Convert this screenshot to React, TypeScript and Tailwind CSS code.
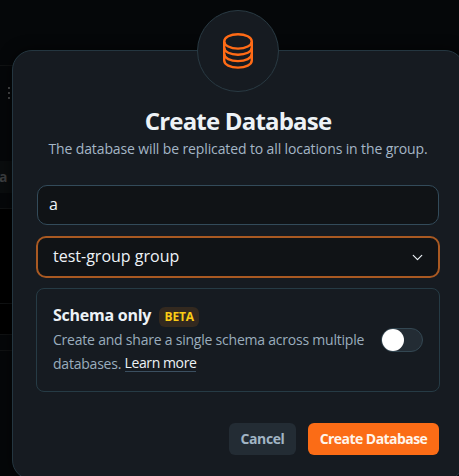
import { ChevronDown } from "lucide-react";

function DatabaseIcon() {
  return (
    <svg width="32" height="38" viewBox="0 0 32 38" fill="none" stroke="#ff6b16" strokeWidth="2.4">
      <ellipse cx="16" cy="9.4" rx="13.8" ry="7.2" />
      <path d="M2.2 9.4V28.6C2.2 32.6 8.3 35.6 16 35.6S29.8 32.6 29.8 28.6V9.4" />
      <path d="M2.2 15.8C2.2 19.8 8.3 22.7 16 22.7S29.8 19.8 29.8 15.8" />
      <path d="M2.2 22.1C2.2 26.1 8.3 29.1 16 29.1S29.8 26.1 29.8 22.1" />
    </svg>
  );
}

function Backdrop() {
  return (
    <div className="absolute inset-0 text-[#3c3e40]">
      <div className="h-[66px] border-b border-[#101213]" />
      <div className="flex h-[95px] flex-col gap-[3px] pt-[21px] pl-2">
        <i className="h-0.5 w-0.5 bg-[#48494a]" />
        <i className="h-0.5 w-0.5 bg-[#48494a]" />
        <i className="h-0.5 w-0.5 bg-[#48494a]" />
      </div>
      <div className="h-8 w-3 bg-[#0a0d0e] text-[14px] leading-8 font-bold"><span className="-ml-px">a</span></div>
      <div className="h-4 border-b border-[#101213]" />
      <div className="h-[95px] border-b border-[#101213] bg-black" />
      <div className="h-[31px] border-b border-[#101213] bg-black" />
      <div className="h-4 border-b border-[#101213]" />
    </div>
  );
}

export default function App() {
  return (
    <main className="relative h-[476px] w-[459px] overflow-hidden bg-[#050709] font-['Open_Sans','Noto_Sans',sans-serif]">
      <Backdrop />
      <section className="absolute top-[50px] left-3 flex h-[430px] w-[453px] flex-col rounded-[20px] border border-[#243640] bg-[#161b21] px-6 shadow-[0_0_14px_rgba(0,0,0,0.6)]">
        <div className="-mt-[41px] mr-[2px] flex h-[82px] w-[82px] shrink-0 items-center justify-center self-center rounded-full border border-[#293a43] bg-[#161b21]">
          <DatabaseIcon />
        </div>
        <h1 className="mt-[13px] mr-px text-center text-[24px] leading-8 font-bold tracking-[-0.8px] whitespace-nowrap text-[#edf2f6]">Create Database</h1>
        <p className="mr-px text-center text-[14px] leading-6 tracking-[-0.12px] whitespace-nowrap text-[#a4b6c6]">The database will be replicated to all locations in the group.</p>
        <div className="mt-6 h-10 w-[402px] shrink-0 rounded-[10px] border border-[#334b5a] bg-[#101316] px-[11px] text-[16px] leading-[37px] text-[#edf2f6]">a</div>
        <div className="mt-[11px] -ml-px flex h-[42px] w-[404px] shrink-0 items-center justify-between rounded-[10px] border-2 border-[#a95922] bg-[#101316] pr-[12px] pl-[15px] text-[16px] text-[#edf2f6]">
          <span className="pb-[2px]">test-group group</span>
          <ChevronDown size={17} strokeWidth={1.7} />
        </div>
        <div className="mt-[10px] -ml-px flex h-[104px] w-[404px] shrink-0 items-center rounded-lg border border-[#263b45] px-4">
          <div className="w-[328px] shrink-0">
            <div className="flex h-6 items-center gap-2">
              <h2 className="-mt-[2px] text-[16px] leading-6 font-bold tracking-[-0.25px] text-[#edf2f6]">Schema only</h2>
              <span className="mt-[2px] flex h-5 w-10 items-center justify-center rounded-md bg-[#33291f] text-[12px] font-bold tracking-[-0.2px] text-[#facc15]">BETA</span>
            </div>
            <p className="text-[14px] leading-6 tracking-[-0.22px] whitespace-nowrap text-[#9aadbd]">
              Create and share a single schema across multiple<br />
              databases. <a className="inline-block h-[20px] border-b border-[#3b4f60] tracking-[-0.4px] text-[#edf2f6]"><span className="relative -top-px">Learn more</span></a>
            </p>
          </div>
          <div className="h-6 w-[42px] rounded-full border border-[#334752] bg-[#232c34]">
            <div className="h-[22px] w-[22px] rounded-full bg-white" />
          </div>
        </div>
        <div className="mt-[31px] flex justify-end gap-3 pr-px text-[14px] font-bold">
          <button className="h-8 w-[67px] rounded-md bg-[#232c34] pb-px tracking-[-0.4px] text-[#a1b5c5]">Cancel</button>
          <button className="h-8 w-[131px] rounded-md bg-[#fb6c16] pb-px tracking-[-0.55px] whitespace-nowrap text-[#fff5ec]">Create Database</button>
        </div>
      </section>
    </main>
  );
}
